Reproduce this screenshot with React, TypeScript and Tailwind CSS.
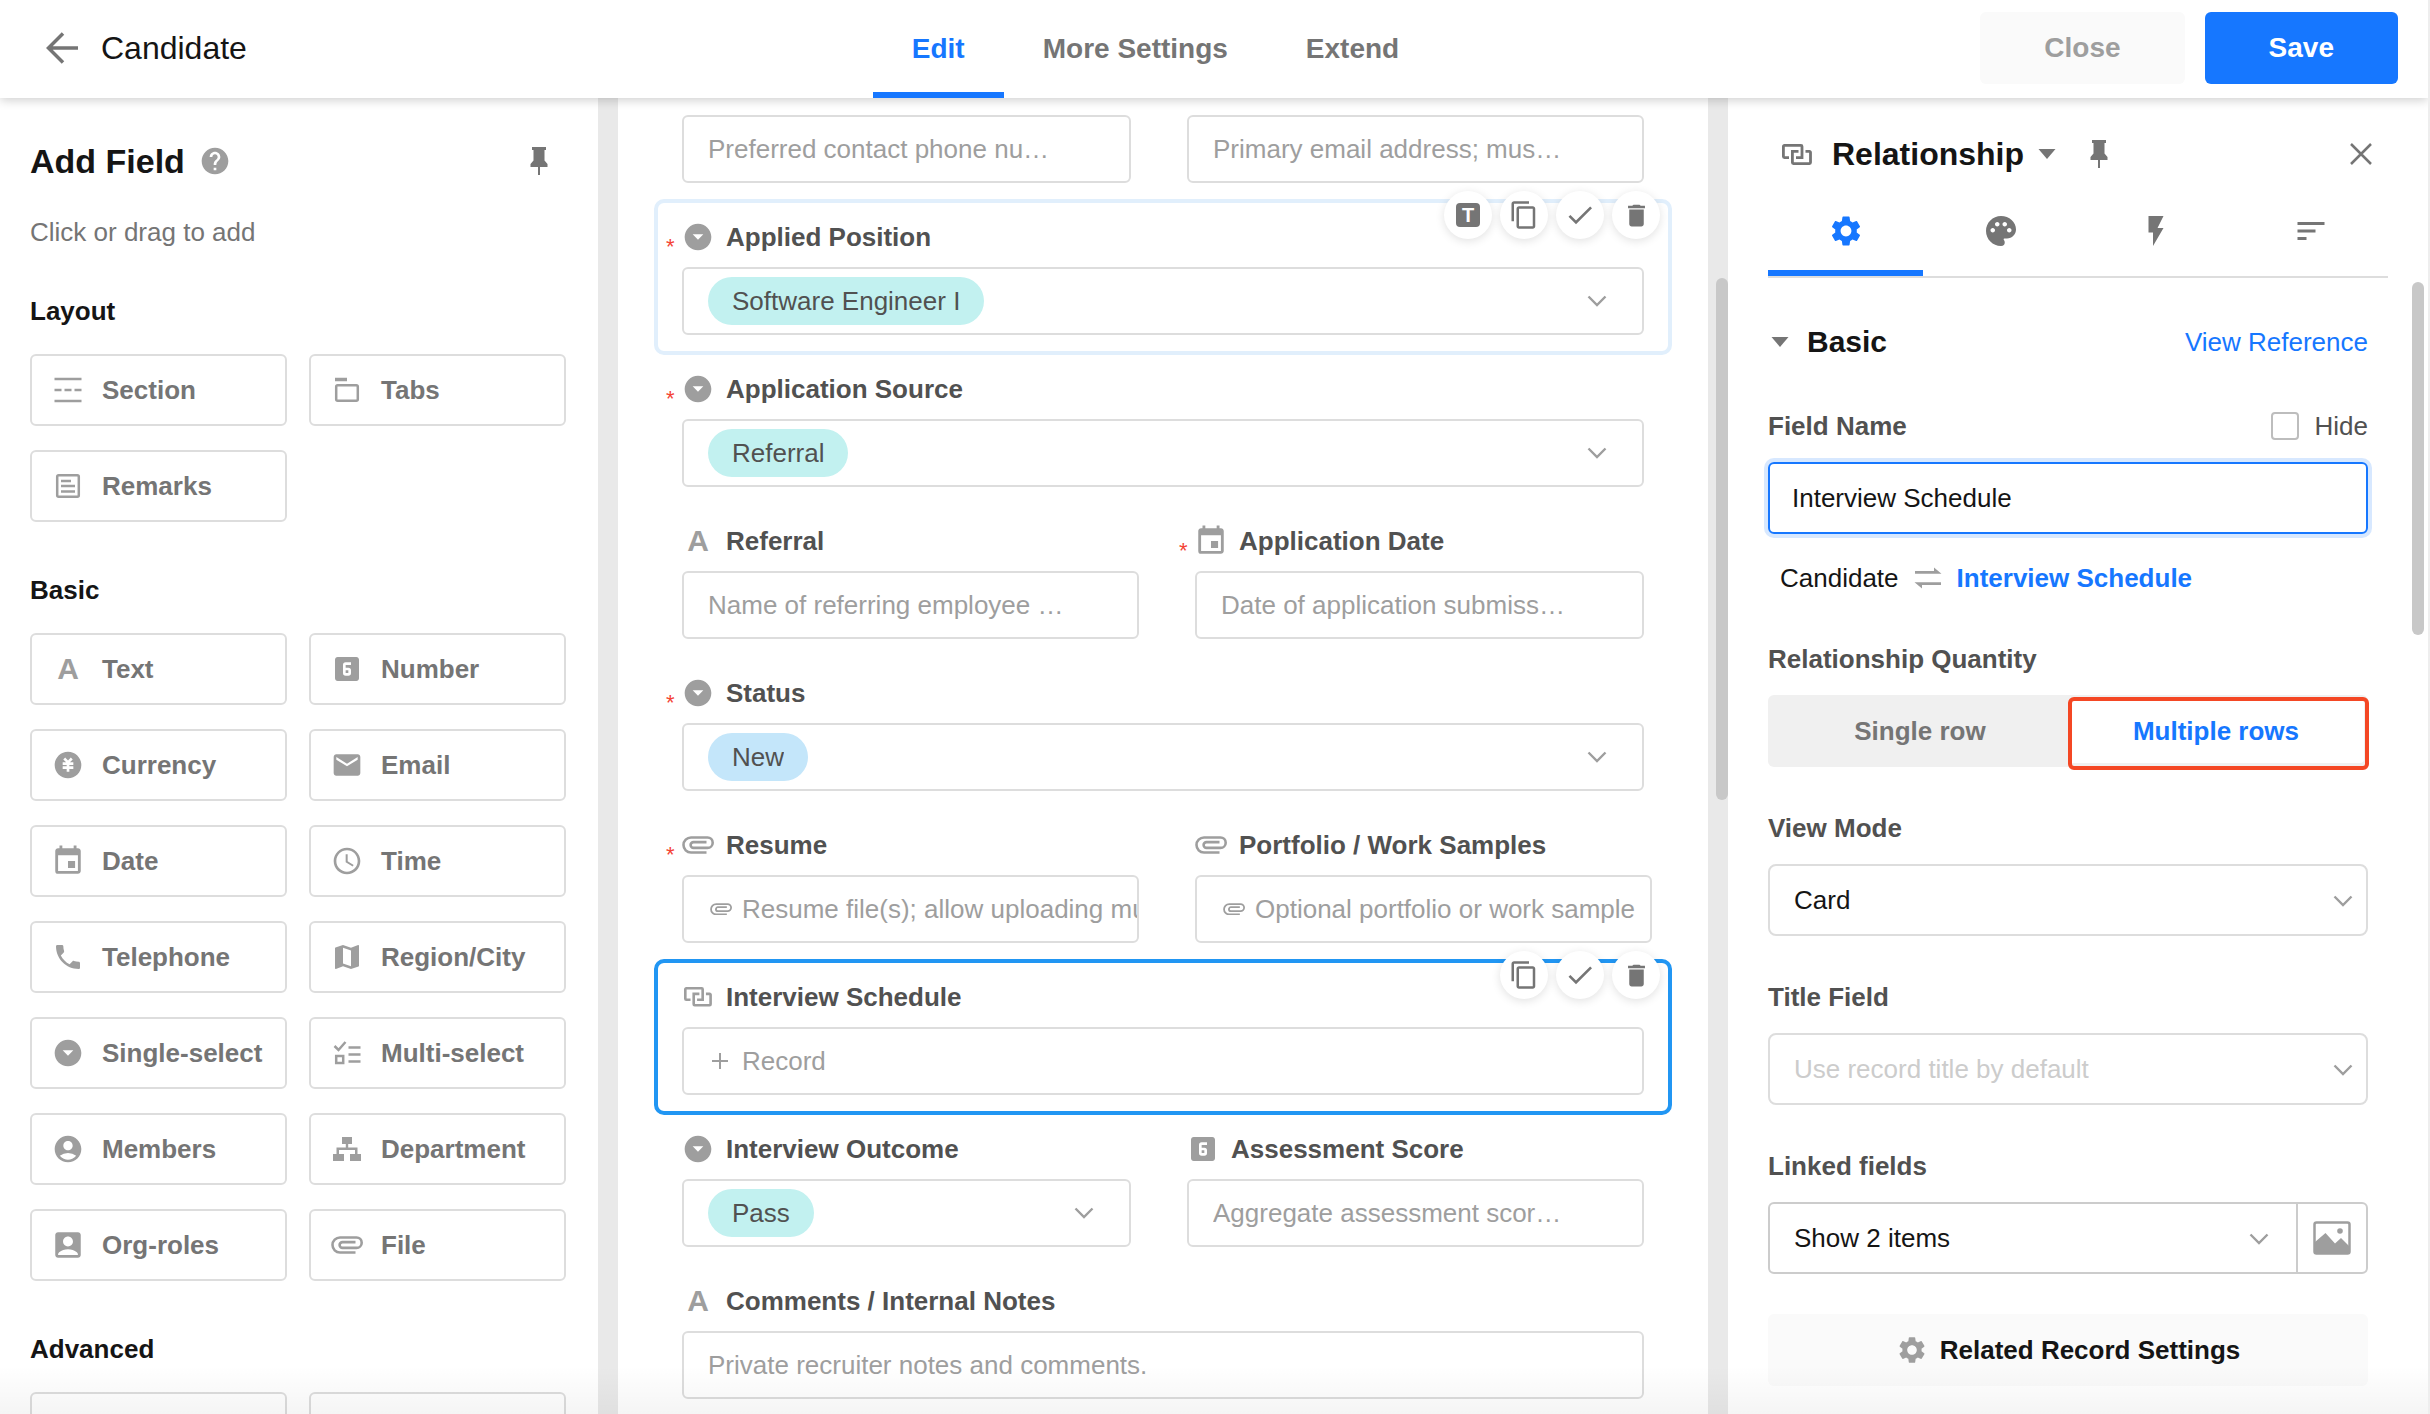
import React from 'react';
import {
  MdAccessTime,
  MdAccountBox,
  MdAccountCircle,
  MdArrowDropDownCircle,
  MdContentCopy,
  MdDelete,
  MdDone,
  MdEmail,
  MdEvent,
  MdFlashOn,
  MdHelp,
  MdLooks6,
  MdMap,
  MdPalette,
  MdPhone,
  MdSettings,
  MdSort,
} from 'react-icons/md';
import { RiMoneyCnyCircleFill } from 'react-icons/ri';

const SectionIcon = () => (
  <svg width="28" height="26" viewBox="0 0 28 26" fill="none" stroke="currentColor" strokeWidth="2.5">
    <path d="M0.5 2h27M0.5 24h27M0.5 13h7M10.5 13h7M20.5 13h7" />
  </svg>
);

const TabsIcon = () => (
  <svg width="26" height="26" viewBox="0 0 26 26" fill="none" stroke="currentColor" strokeWidth="2.5">
    <path d="M1 2.5h12" strokeWidth="3.5" />
    <rect x="2.2" y="8.2" width="21.6" height="15.6" rx="1.5" />
  </svg>
);

const RemarksIcon = () => (
  <svg width="26" height="26" viewBox="0 0 26 26" fill="none" stroke="currentColor" strokeWidth="2.5">
    <rect x="2.2" y="2.2" width="21.6" height="21.6" rx="1.5" />
    <path d="M6 8h10M6 13h14M6 18.5h14" />
  </svg>
);

const MultiIcon = () => (
  <svg width="28" height="26" viewBox="0 0 28 26" fill="none" stroke="currentColor" strokeWidth="2.5">
    <path d="M1.5 6l4 4L12.5 2M15.5 7.5H27.5M15.5 14.5H27.5M15.5 21.5H27.5" />
    <rect x="3.2" y="16" width="7" height="7" />
  </svg>
);

const DepartmentIcon = () => (
  <svg width="28" height="26" viewBox="0 0 28 26" fill="currentColor">
    <path d="M9 1h10v7h-3.8v3.5H24.5V18H28v7H17v-7h5v-4H6v4h5v7H0v-7h3.5v-6.5h9.3V8H9z" />
  </svg>
);

const ClipIcon = ({ className = 'w-8' }: { className?: string }) => (
  <svg className={className} viewBox="0 0 32 18" fill="none" stroke="currentColor" strokeWidth="2.6">
    <path d="M24.5 16.5H9a7.5 7.5 0 0 1 0-15h16.5a5.2 5.2 0 0 1 0 10.4H11.5a2.9 2.9 0 0 1 0-5.8h13" />
  </svg>
);

const RelationIcon = ({ className = 'w-[30px]' }: { className?: string }) => (
  <svg className={className} viewBox="0 0 30 21" fill="none" stroke="currentColor" strokeWidth="2.8">
    <path d="M7 13.6H2.4a1 1 0 0 1-1-1V2.4a1 1 0 0 1 1-1H19a1 1 0 0 1 1 1v11.2h-6" />
    <path d="M23.5 7.4h4a1 1 0 0 1 1 1v10.2a1 1 0 0 1-1 1H11.4a1 1 0 0 1-1-1V7.4H16.5" />
  </svg>
);

const PinIcon = () => (
  <svg width="18" height="28" viewBox="0 0 18 28" fill="currentColor">
    <path d="M2 0h14v3h-1.5v10.5L17.5 17v3h-7.5v8H8v-8H.5v-3l3-3.5V3H2z" />
  </svg>
);

const Chevron = ({ className = '' }: { className?: string }) => (
  <svg
    className={`w-5 h-3 shrink-0 text-[#9e9e9e] ${className}`}
    viewBox="0 0 20 12"
    fill="none"
    stroke="currentColor"
    strokeWidth="2.4"
  >
    <path d="M1.5 1.5L10 10l8.5-8.5" />
  </svg>
);

const Caret = () => (
  <svg width="18" height="10" viewBox="0 0 18 10" fill="currentColor">
    <path d="M0.5 0h17L9 10z" />
  </svg>
);

const TextIcon = () => (
  <span aria-hidden="true" className="text-[30px] leading-8 font-bold">
    A
  </span>
);

const TitleIcon = () => (
  <span
    aria-hidden="true"
    className="flex h-6 w-6 items-center justify-center rounded bg-[#757575] text-xl leading-6 font-bold text-white"
  >
    T
  </span>
);

const DropIcon = () => <MdArrowDropDownCircle size={32} />;

type Item = { label: string; icon: React.ReactNode };

const layoutItems: Item[] = [
  { label: 'Section', icon: <SectionIcon /> },
  { label: 'Tabs', icon: <TabsIcon /> },
  { label: 'Remarks', icon: <RemarksIcon /> },
];

const basicItems: Item[] = [
  { label: 'Text', icon: <TextIcon /> },
  { label: 'Number', icon: <MdLooks6 size={32} /> },
  { label: 'Currency', icon: <RiMoneyCnyCircleFill size={32} /> },
  { label: 'Email', icon: <MdEmail size={32} /> },
  { label: 'Date', icon: <MdEvent size={34} /> },
  { label: 'Time', icon: <MdAccessTime size={32} /> },
  { label: 'Telephone', icon: <MdPhone size={32} /> },
  { label: 'Region/City', icon: <MdMap size={32} /> },
  { label: 'Single-select', icon: <DropIcon /> },
  { label: 'Multi-select', icon: <MultiIcon /> },
  { label: 'Members', icon: <MdAccountCircle size={32} /> },
  { label: 'Department', icon: <DepartmentIcon /> },
  { label: 'Org-roles', icon: <MdAccountBox size={34} /> },
  { label: 'File', icon: <ClipIcon /> },
];

function FieldGroup({ title, items }: { title: string; items: Item[] }) {
  return (
    <section className="mb-[50px]">
      <h3 className="mb-[25px] leading-9 font-bold text-[#151515]">{title}</h3>
      <div className="grid grid-cols-2 gap-x-[22px] gap-y-6">
        {items.map((item) => (
          <button
            key={item.label}
            type="button"
            className="flex h-[72px] items-center gap-5 rounded-md border-2 border-[#ddd] pl-[22px] font-bold text-[#757575]"
          >
            <span className="flex w-7 shrink-0 justify-center text-[#9e9e9e] [&>svg]:shrink-0">{item.icon}</span>
            {item.label}
          </button>
        ))}
      </div>
    </section>
  );
}

function AddFieldPanel() {
  return (
    <aside className="w-[598px] shrink-0 overflow-hidden pt-[45px] pr-8 pl-[30px]">
      <div className="flex items-center justify-between pr-[18px]">
        <h2 className="flex items-center gap-3.5 text-[34px] leading-9 font-bold text-[#151515]">
          Add Field
          <MdHelp size={32} className="text-[#9e9e9e]" />
        </h2>
        <button type="button" aria-label="Pin panel" className="text-[#757575]">
          <PinIcon />
        </button>
      </div>
      <p className="mt-[35px] mb-[43px] leading-9 text-[#757575]">Click or drag to add</p>
      <FieldGroup title="Layout" items={layoutItems} />
      <FieldGroup title="Basic" items={basicItems} />
      <section>
        <h3 className="mb-[25px] leading-9 font-bold text-[#151515]">Advanced</h3>
        <div className="grid grid-cols-2 gap-x-[22px]">
          <div className="h-[72px] rounded-md border-2 border-[#ddd]" />
          <div className="h-[72px] rounded-md border-2 border-[#ddd]" />
        </div>
      </section>
    </aside>
  );
}

function FieldLabel({
  id,
  icon,
  required,
  children,
}: {
  id: string;
  icon: React.ReactNode;
  required?: boolean;
  children: React.ReactNode;
}) {
  return (
    <label htmlFor={id} className="relative mb-3 flex h-9 items-center gap-3 font-bold text-[#515151]">
      {required && (
        <span className="absolute bottom-0 -left-4 text-[22px] leading-4 font-normal text-[#f44336]">*</span>
      )}
      <span className="flex w-8 shrink-0 justify-center text-[#9e9e9e] [&>svg]:shrink-0">{icon}</span>
      {children}
    </label>
  );
}

function TextField({ id, placeholder, label }: { id: string; placeholder: string; label?: string }) {
  return (
    <input
      id={id}
      aria-label={label}
      placeholder={placeholder}
      className="block h-[68px] w-full rounded-md border-2 border-[#ddd] px-6 text-[#151515] outline-none placeholder:text-[#9e9e9e]"
    />
  );
}

function PillSelect({ id, value, color }: { id: string; value: string; color: string }) {
  return (
    <div className="flex h-[68px] items-center justify-between rounded-md border-2 border-[#ddd] pr-[35px] pl-6">
      <select
        id={id}
        className={`h-12 appearance-none rounded-full px-6 text-[#515151] field-sizing-content ${color}`}
      >
        <option>{value}</option>
      </select>
      <Chevron />
    </div>
  );
}

function FileField({ id, text }: { id: string; text: string }) {
  return (
    <button
      id={id}
      type="button"
      className="flex h-[68px] w-full items-center gap-2.5 overflow-hidden rounded-md border-2 border-[#ddd] pl-[26px] whitespace-nowrap text-[#9e9e9e]"
    >
      <ClipIcon className="w-[22px] shrink-0" />
      {text}
    </button>
  );
}

function Actions({ convert }: { convert?: boolean }) {
  const cls =
    'flex h-12 w-12 items-center justify-center rounded-full bg-white shadow-[0_2px_10px_rgba(0,0,0,0.12)]';
  return (
    <div className="absolute -top-2.5 right-2.5 flex gap-2 text-[#757575]">
      {convert && (
        <button type="button" aria-label="Change type" className={cls}>
          <TitleIcon />
        </button>
      )}
      <button type="button" aria-label="Copy" className={cls}>
        <MdContentCopy size={30} />
      </button>
      <button type="button" aria-label="Validate" className={cls}>
        <MdDone size={32} />
      </button>
      <button type="button" aria-label="Delete" className={cls}>
        <MdDelete size={29} />
      </button>
    </div>
  );
}

const row = 'relative rounded-lg px-[26px] py-[18px]';

function FormCanvas() {
  return (
    <main className="min-w-0 flex-1 overflow-hidden px-[38px]">
      <div className="grid grid-cols-[449fr_457fr] gap-14 px-[26px] pt-[17px] pb-[18px]">
        <TextField id="phone" label="Phone" placeholder="Preferred contact phone nu…" />
        <TextField id="email" label="Email" placeholder="Primary email address; mus…" />
      </div>

      <div className={`${row} outline-4 -outline-offset-2 outline-[#e1effc]`}>
        <FieldLabel id="position" icon={<DropIcon />} required>
          Applied Position
        </FieldLabel>
        <PillSelect id="position" value="Software Engineer I" color="bg-[#c2f1f0]" />
        <Actions convert />
      </div>

      <div className={row}>
        <FieldLabel id="source" icon={<DropIcon />} required>
          Application Source
        </FieldLabel>
        <PillSelect id="source" value="Referral" color="bg-[#c2f1f0]" />
      </div>

      <div className={`${row} grid grid-cols-[457fr_449fr] gap-14`}>
        <div>
          <FieldLabel id="referral" icon={<TextIcon />}>
            Referral
          </FieldLabel>
          <TextField id="referral" placeholder="Name of referring employee …" />
        </div>
        <div>
          <FieldLabel id="date" icon={<MdEvent size={34} />} required>
            Application Date
          </FieldLabel>
          <TextField id="date" placeholder="Date of application submiss…" />
        </div>
      </div>

      <div className={row}>
        <FieldLabel id="status" icon={<DropIcon />} required>
          Status
        </FieldLabel>
        <PillSelect id="status" value="New" color="bg-[#c4e6fa]" />
      </div>

      <div className={`${row} grid grid-cols-[457fr_449fr] gap-14`}>
        <div className="min-w-0">
          <FieldLabel id="resume" icon={<ClipIcon />} required>
            Resume
          </FieldLabel>
          <FileField id="resume" text="Resume file(s); allow uploading mu" />
        </div>
        <div className="-mr-2 min-w-0">
          <FieldLabel id="portfolio" icon={<ClipIcon />}>
            Portfolio / Work Samples
          </FieldLabel>
          <FileField id="portfolio" text="Optional portfolio or work sample" />
        </div>
      </div>

      <div className={`${row} outline-4 -outline-offset-2 outline-[#2196f3]`}>
        <FieldLabel id="interview" icon={<RelationIcon className="w-7" />}>
          Interview Schedule
        </FieldLabel>
        <button
          id="interview"
          type="button"
          className="flex h-[68px] w-full items-center gap-3.5 rounded-md border-2 border-[#ddd] pl-7 text-[#9e9e9e]"
        >
          <svg width="16" height="16" viewBox="0 0 16 16" stroke="currentColor" strokeWidth="2">
            <path d="M8 0v16M0 8h16" />
          </svg>
          Record
        </button>
        <Actions />
      </div>

      <div className={`${row} grid grid-cols-[449fr_457fr] gap-14`}>
        <div>
          <FieldLabel id="outcome" icon={<DropIcon />}>
            Interview Outcome
          </FieldLabel>
          <PillSelect id="outcome" value="Pass" color="bg-[#c2f1f0]" />
        </div>
        <div>
          <FieldLabel id="score" icon={<MdLooks6 size={32} />}>
            Assessment Score
          </FieldLabel>
          <TextField id="score" placeholder="Aggregate assessment scor…" />
        </div>
      </div>

      <div className={row}>
        <FieldLabel id="notes" icon={<TextIcon />}>
          Comments / Internal Notes
        </FieldLabel>
        <TextField id="notes" placeholder="Private recruiter notes and comments." />
      </div>
    </main>
  );
}

const settingLabel = 'mb-[18px] block leading-9 font-bold text-[#515151]';

function SettingsPanel() {
  const [name, setName] = React.useState('Interview Schedule');
  const [hidden, setHidden] = React.useState(false);
  const tab = 'flex h-[88px] flex-1 items-center justify-center border-b-6 pt-1';

  return (
    <aside className="relative w-[700px] shrink-0 overflow-hidden pr-10 pl-10">
      <div className="flex h-[90px] items-center pt-[22px] pr-4 pl-3.5 text-[#757575]">
        <RelationIcon />
        <h2 className="ml-5 text-[32px] leading-9 font-bold text-[#151515]">Relationship</h2>
        <button type="button" aria-label="Change field type" className="ml-3.5">
          <Caret />
        </button>
        <button type="button" aria-label="Pin settings" className="ml-[34px]">
          <PinIcon />
        </button>
        <button type="button" aria-label="Close settings" className="ml-auto">
          <svg width="22" height="22" viewBox="0 0 22 22" stroke="currentColor" strokeWidth="2.5">
            <path d="M1 1l20 20M21 1L1 21" />
          </svg>
        </button>
      </div>

      <div role="tablist" className="flex border-b-2 border-[#ddd] text-[#757575]">
        <button
          type="button"
          role="tab"
          aria-label="Settings"
          aria-selected="true"
          className={`${tab} border-[#1677ff] text-[#1677ff]`}
        >
          <MdSettings size={36} />
        </button>
        <button type="button" role="tab" aria-label="Style" className={`${tab} border-transparent`}>
          <MdPalette size={36} />
        </button>
        <button type="button" role="tab" aria-label="Events" className={`${tab} border-transparent`}>
          <MdFlashOn size={36} />
        </button>
        <button type="button" role="tab" aria-label="Description" className={`${tab} border-transparent`}>
          <MdSort size={36} />
        </button>
      </div>

      <div className="pt-[46px] pr-5">
        <div className="mb-12 flex items-center justify-between">
          <h3 className="flex items-center gap-[18px] pl-[3px] text-[30px] leading-9 font-bold text-[#151515]">
            <span className="text-[#757575]">
              <Caret />
            </span>
            Basic
          </h3>
          <a href="#reference" className="leading-9 text-[#1677ff]">
            View Reference
          </a>
        </div>

        <div className="flex items-start justify-between">
          <label htmlFor="field-name" className={settingLabel}>
            Field Name
          </label>
          <label className="flex items-center gap-4 leading-9 text-[#515151]">
            <input
              type="checkbox"
              checked={hidden}
              onChange={(e) => setHidden(e.target.checked)}
              className="h-7 w-7 appearance-none rounded border-2 border-[#bdbdbd] checked:bg-[#1677ff]"
            />
            Hide
          </label>
        </div>
        <input
          id="field-name"
          value={name}
          onChange={(e) => setName(e.target.value)}
          className="block h-[72px] w-full rounded-md border-2 border-[#1677ff] px-[22px] text-[#151515] ring-4 ring-[#d7e8ff] outline-none"
        />

        <div className="mt-[26px] mb-[45px] flex items-center pl-3 leading-9 text-[#151515]">
          Candidate
          <svg width="28" height="22" viewBox="0 0 28 22" fill="#9e9e9e" className="mx-[15px]">
            <path d="M1 4h19V0.5L27.5 6.8H1zM27 18H8v3.500L0.500 15.200H27z" />
          </svg>
          <a href="#interview" className="font-bold text-[#1677ff]">
            Interview Schedule
          </a>
        </div>

        <p className={settingLabel}>Relationship Quantity</p>
        <div className="flex h-[72px] rounded-md bg-[#f0f0f0] p-1 font-bold">
          <button type="button" className="flex-1 text-[#757575]">
            Single row
          </button>
          <button type="button" className="relative flex-1 rounded bg-white text-[#1677ff]">
            Multiple rows
            <span className="absolute -top-0.5 -right-[5px] -bottom-[7px] left-0 rounded-md border-4 border-[#f44724]" />
          </button>
        </div>

        <label htmlFor="view-mode" className={`${settingLabel} mt-[43px]`}>
          View Mode
        </label>
        <div className="relative">
          <select
            id="view-mode"
            className="block h-[72px] w-full appearance-none rounded-lg border-2 border-[#ddd] bg-white px-6 text-[#151515]"
          >
            <option>Card</option>
          </select>
          <Chevron className="pointer-events-none absolute top-[31px] right-[15px]" />
        </div>

        <label htmlFor="title-field" className={`${settingLabel} mt-[43px]`}>
          Title Field
        </label>
        <div className="relative">
          <select
            id="title-field"
            className="block h-[72px] w-full appearance-none rounded-lg border-2 border-[#ddd] bg-white px-6 text-[#ccc]"
          >
            <option>Use record title by default</option>
          </select>
          <Chevron className="pointer-events-none absolute top-[31px] right-[15px]" />
        </div>

        <label htmlFor="linked-fields" className={`${settingLabel} mt-[43px]`}>
          Linked fields
        </label>
        <div className="flex h-[72px] rounded-md border-2 border-[#ccc]">
          <div className="relative flex-1 border-r-2 border-[#ccc]">
            <select
              id="linked-fields"
              className="block h-full w-full appearance-none bg-transparent px-6 text-[#151515]"
            >
              <option>Show 2 items</option>
            </select>
            <Chevron className="pointer-events-none absolute top-[29px] right-[27px]" />
          </div>
          <button type="button" aria-label="Cover image" className="flex w-[68px] items-center justify-center text-[#9e9e9e]">
            <svg width="38" height="34" viewBox="0 0 38 34" fill="none" stroke="currentColor" strokeWidth="2.5">
              <rect x="1.5" y="1.5" width="35" height="31" rx="2" />
              <path d="M2 21L12.5 12L22 22.5L28 17L36 25V32H2z" fill="currentColor" stroke="none" />
              <circle cx="27" cy="10" r="2.8" fill="currentColor" stroke="none" />
            </svg>
          </button>
        </div>

        <button
          type="button"
          className="mt-10 flex h-[72px] w-full items-center justify-center gap-3 rounded-md bg-[#fafafa] font-bold text-[#151515]"
        >
          <MdSettings size={32} className="text-[#9e9e9e]" />
          Related Record Settings
        </button>
      </div>

      <div className="absolute top-[184px] right-1 h-[353px] w-3 rounded-full bg-[#c8c8c8]" />
    </aside>
  );
}

function Header() {
  const tab = 'flex h-full items-center border-b-6 px-[39px] pt-1.5';
  return (
    <header className="relative z-10 grid h-[98px] shrink-0 grid-cols-[873fr_auto_990fr] bg-white text-[28px] font-bold shadow-[0_2px_10px_rgba(0,0,0,0.2)]">
      <div className="flex items-center gap-[22px] pb-0.5 pl-[46px]">
        <button type="button" aria-label="Back" className="text-[#757575]">
          <svg width="33" height="32" viewBox="0 0 33 32" fill="none" stroke="currentColor" strokeWidth="3.5">
            <path d="M32 16H3M17 1.500L2.500 16L17 30.500" />
          </svg>
        </button>
        <h1 className="text-[32px] leading-9 font-normal text-[#151515]">Candidate</h1>
      </div>
      <nav className="flex h-[98px] text-[#757575]">
        <a href="#edit" className={`${tab} border-[#1677ff] text-[#1677ff]`}>
          Edit
        </a>
        <a href="#more" className={`${tab} border-transparent`}>
          More Settings
        </a>
        <a href="#extend" className={`${tab} border-transparent`}>
          Extend
        </a>
      </nav>
      <div className="flex items-center justify-end gap-5 pr-[30px] pb-0.5">
        <button type="button" className="h-[72px] rounded-md bg-[#fafafa] px-16 text-[#9e9e9e]">
          Close
        </button>
        <button type="button" className="h-[72px] rounded-md bg-[#1677ff] px-16 text-white">
          Save
        </button>
      </div>
    </header>
  );
}

const App: React.FC = () => {
  return (
    <div className="relative flex h-screen flex-col overflow-hidden border-r-2 border-[#eee] bg-white font-['Liberation_Sans',Arial,sans-serif] text-[26px] leading-9">
      <Header />
      <div className="flex min-h-0 flex-1">
        <AddFieldPanel />
        <div className="w-5 shrink-0 bg-[#e9e9e9]" />
        <FormCanvas />
        <div className="flex w-5 shrink-0 justify-end bg-[#e9e9e9] pt-[180px]">
          <div className="h-[522px] w-3 rounded-full bg-[#c8c8c8]" />
        </div>
        <SettingsPanel />
      </div>
      <div className="pointer-events-none absolute inset-x-0 bottom-0 h-12 bg-linear-to-t from-black/4 to-transparent" />
    </div>
  );
};

export default App;
